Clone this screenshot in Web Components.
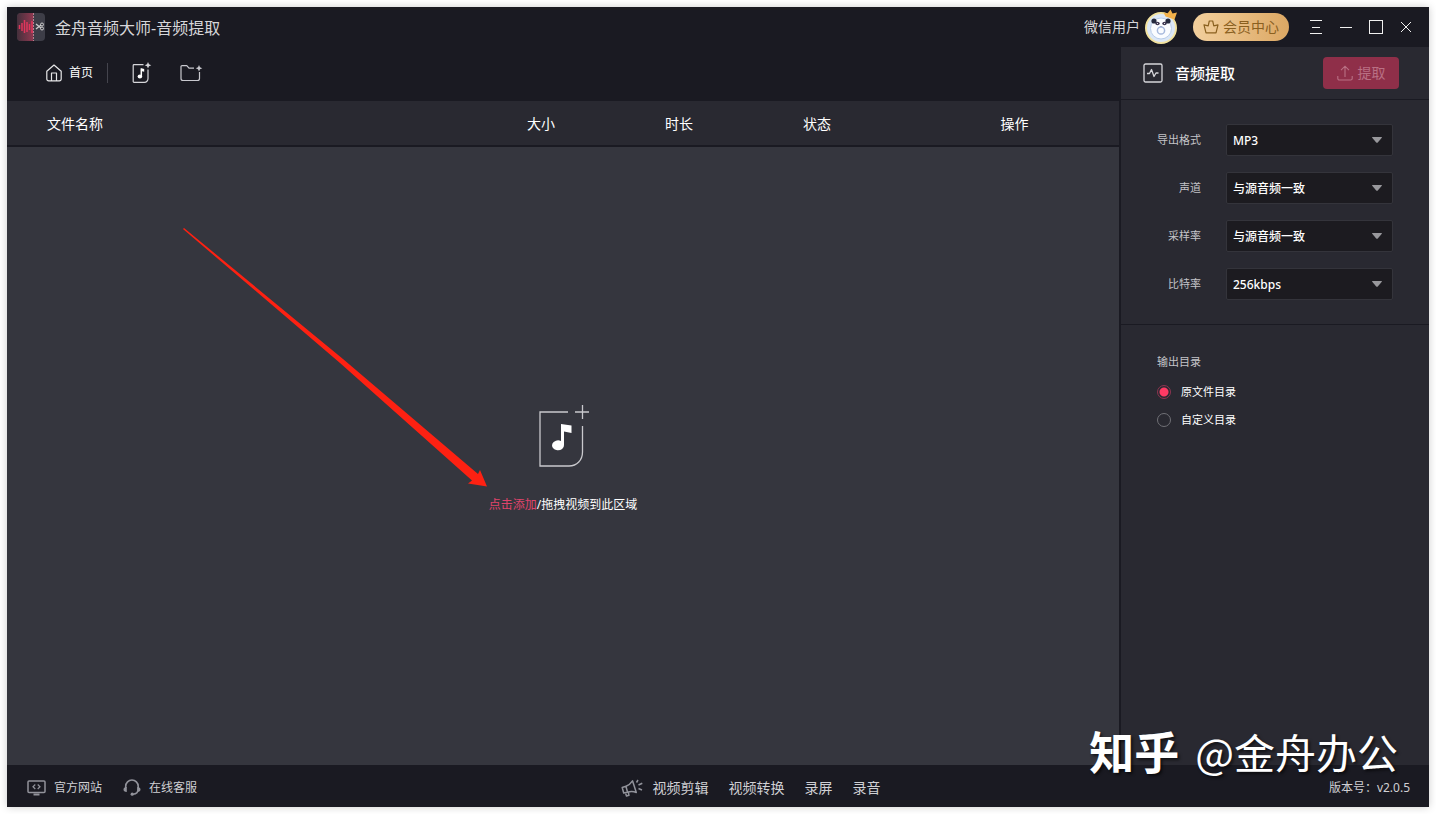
<!DOCTYPE html>
<html lang="zh-CN">
<head>
<meta charset="utf-8">
<meta name="viewport" content="width=device-width, initial-scale=1">
<title>金舟音频大师-音频提取</title>
<style>
  html, body { height: 100%; }
  body {
    --bar: #1a1a22;
    --panel: #292931;
    --stage: #35363e;
    --accent: #ff3a64;
    --muted: #c4c4c8;
    background: #fff;
    box-sizing: border-box;
    color: #fff;
    font-family: "Noto Sans", "Noto Sans CJK SC", sans-serif;
    font-size: 12px;
    line-height: 20px;
    margin: 0;
    padding: 7px;
  }
</style>
</head>
<body>
<audio-window></audio-window>

<script>
const ICONS = {
  app: `<svg width="28" height="28" viewBox="0 0 28 28">
    <defs><linearGradient id="g"><stop offset="0" stop-color="#44303c"/><stop offset="1" stop-color="#8f3850"/></linearGradient></defs>
    <rect width="28" height="28" rx="4" fill="#3d3d47"/>
    <path d="M4 0H16V28H4a4 4 0 0 1-4-4V4a4 4 0 0 1 4-4Z" fill="url(#g)"/>
    <path d="M2.500 12v4M5 10v8M7.500 7v13M10 9v10M12.500 11v6M15 8v12" stroke="#e0365c" stroke-width="1.500"/>
    <path d="M16.500 0V28" stroke="#b9808f" stroke-dasharray="2 1"/>
    <path d="M19 11l5 4M19 16l5-4" stroke="#ccc" stroke-width="1.300"/>
    <circle cx="25" cy="11.500" r="1.500" fill="none" stroke="#ccc"/><circle cx="25" cy="15.500" r="1.500" fill="none" stroke="#ccc"/></svg>`,
  home: `<svg width="16" height="18" viewBox="0 0 16 18" fill="none" stroke="#e6e6e8" stroke-width="1.200" stroke-linejoin="round">
    <path d="M.8 7.200 8 1l7.200 6.200V15a1.800 1.800 0 0 1-1.800 1.800H2.600A1.800 1.800 0 0 1 .8 15ZM5.500 16.500V9h5v7.500"/></svg>`,
  addMusic: `<svg width="20" height="22" viewBox="0 0 20 22" fill="none" stroke="#d6d6da" stroke-width="1.200">
    <path d="M11.500 2.600H2a.8.8 0 0 0-.8.8V19.500a.8.8 0 0 0 .8.8H12.500a3.500 3.500 0 0 0 3.500-3.500V7.500"/>
    <path d="M16 0 17 2.300 19.300 3.300 17 4.300 16 6.500 15 4.300 12.700 3.300 15 2.300Z" fill="#d6d6da" stroke="none"/>
    <path d="M9.300 7.300V14" stroke="#fff" stroke-width="1.500"/><path d="M8.600 6 12.200 7V9.800L9 9Z" fill="#fff" stroke="none"/><ellipse cx="7.900" cy="14.500" rx="2.300" ry="1.900" fill="#fff" stroke="none"/></svg>`,
  addFolder: `<svg width="23" height="18" viewBox="0 0 23 18" fill="none" stroke="#c8c8ce" stroke-width="1.200" stroke-linejoin="round">
    <path d="M14 4.200H9L6.800 1.600H2a1 1 0 0 0-1 1V14.500A2 2 0 0 0 3 16.500H17.500A2 2 0 0 0 19.500 14.500V8"/>
    <path d="M19 1 20 3.200 22.300 4.200 20 5.200 19 7.400 18 5.200 15.700 4.200 18 3.200Z" fill="#c8c8ce" stroke="none"/></svg>`,
  crown: `<svg width="16" height="14" viewBox="0 0 16 14" fill="none" stroke="#8a601f" stroke-width="1.200" stroke-linejoin="round">
    <path d="M1 4.800 5.200 5.800 6.300 1H9.700L10.800 5.800 15 4.800 13 12.800H3Z"/></svg>`,
  avatar: `<svg width="34" height="36" viewBox="0 0 34 36">
    <circle cx="16" cy="19" r="15" fill="#dbe7f6" stroke="#f3e3a0" stroke-width="2"/>
    <ellipse cx="16" cy="19.500" rx="10.500" ry="10.500" fill="#fafcff" stroke="#b9cdea"/>
    <circle cx="9" cy="12" r="2.600" fill="#252a3e"/><circle cx="23" cy="12" r="2.600" fill="#252a3e"/>
    <ellipse cx="12.500" cy="14.500" rx="2.200" ry="1.800" fill="#3c3650"/><ellipse cx="19.500" cy="14.500" rx="2.200" ry="1.800" fill="#3c3650"/>
    <circle cx="12.500" cy="14.500" r=".6" fill="#fff"/><circle cx="19.500" cy="14.500" r=".6" fill="#fff"/>
    <path d="M15 17H17L16 18Z" fill="#3c3650"/>
    <circle cx="16" cy="21.500" r="3.600" fill="none" stroke="#a6b8dc" stroke-width="1.500"/>
    <path d="M18.500 3.500 22.500 4.500 25.500 .5 27.500 4.500 32 3.500 29.500 10.500 20.500 7.500Z" fill="#f3b14a"/></svg>`,
  menu: `<svg width="14" height="14" viewBox="0 0 14 14" stroke="#f0f0f0"><path d="M1 .5H13M3 7.500H11M1 13.500H13"/></svg>`,
  minimize: `<svg width="14" height="14" viewBox="0 0 14 14" stroke="#f0f0f0"><path d="M1 7.500H13"/></svg>`,
  maximize: `<svg width="14" height="14" viewBox="0 0 14 14" fill="none" stroke="#f0f0f0"><rect x=".5" y=".5" width="13" height="13"/></svg>`,
  close: `<svg width="14" height="14" viewBox="0 0 14 14" stroke="#f0f0f0"><path d="M2 2 12 12M12 2 2 12"/></svg>`,
  wave: `<svg width="20" height="20" viewBox="0 0 20 20" fill="none" stroke="#d6d6da" stroke-width="1.300" stroke-linejoin="round">
    <rect x="1" y="1" width="18" height="18" rx="1.500"/><path d="M4 10.500H6.500L8.500 6.500 11 13.500 13 10H15.500"/></svg>`,
  upload: `<svg width="16" height="16" viewBox="0 0 16 16" fill="none" stroke="#b97084" stroke-width="1.100">
    <path d="M8 12V1.500M4 5.200 8 1.200 12 5.200M.8 11V13.500A1.500 1.500 0 0 0 2.300 15H13.700A1.500 1.500 0 0 0 15.200 13.500V11"/></svg>`,
  dropMusic: `<svg width="52" height="62" viewBox="0 0 52 62" fill="none" stroke="#c9c9cd" stroke-width="1.300">
    <path d="M31 7H3V61H32C40 61 45.500 55 45.500 47V21M45.500 0V14M38 7H52"/>
    <path d="M24 19 34.500 20.500V28L27 26.500V40A6 5 0 1 1 24 36Z" fill="#fff" stroke="none"/></svg>`,
  site: `<svg width="19" height="16" viewBox="0 0 19 16" fill="none" stroke="#92939b" stroke-width="1.500">
    <rect x="1" y="1" width="17" height="11.500" rx="1"/><path d="M8.300 4.500 6 6.700 8.300 9M10.700 4.500 13 6.700 10.700 9" stroke-width="1.200"/><path d="M6.500 14.500H12.500" stroke-width="2"/></svg>`,
  service: `<svg width="18" height="17" viewBox="0 0 18 17" fill="none" stroke="#92939b" stroke-width="1.600">
    <path d="M2.700 9V7.300A6.200 6.200 0 0 1 15.200 7.300V10C15.200 13.200 13 15 10 15.300"/>
    <path d="M3.800 8V13C1.500 13 .5 11.800 .5 10.500S1.500 8 3.800 8ZM14.200 8V13C16.500 13 17.500 11.800 17.500 10.500S16.500 8 14.200 8Z" fill="#92939b" stroke="none"/>
    <circle cx="9.200" cy="15.200" r="1.600" fill="#92939b" stroke="none"/></svg>`,
  horn: `<svg width="22" height="18" viewBox="0 0 22 18" fill="none" stroke="#92939b" stroke-width="1.500" stroke-linejoin="round">
    <path d="M1.200 8.500 5 7.300C8 6.300 10 4 11.500 1.800L15.300 13.500C12.500 12.300 9.500 12.200 6.500 13.200L2.700 14ZM5 7.500 6.500 13M4.500 14 5.500 17 8 16.300 7.300 13.200M15.500 3.500 17 1M17.500 6 21.300 4.300M17.500 9.500 21 11"/></svg>`,
  caret: `<svg width="12" height="8" viewBox="0 0 12 8"><path d="M1.500 1H10.500Q11.200 1 10.800 1.700L6.800 6.500Q6 7.200 5.200 6.500L1.200 1.700Q.8 1 1.500 1Z" fill="#98989c"/></svg>`
}

// rules every shadow root starts with
const BASE = `
  * { box-sizing: border-box; }
  button {
    background: none; border: 0; color: inherit; cursor: pointer;
    font: inherit; margin: 0; padding: 0;
  }
  a { color: inherit; text-decoration: none; }
`

function define(name, html) {
  const template = document.createElement('template')
  template.innerHTML = html.replace('<style>', `<style>${BASE}`)
  customElements.define(name, class extends HTMLElement {
    constructor () {
      super()
      this.attachShadow({mode: 'open'}).append(template.content.cloneNode(true))
    }
  })
}

customElements.define('au-icon', class extends HTMLElement {
  constructor () {
    super()
    this.attachShadow({mode: 'open'})
  }

  connectedCallback () {
    this.setAttribute('aria-hidden', 'true')
    this.shadowRoot.innerHTML = `
      <style>
        :host { display: inline-flex; flex: none; }
        svg { display: block; }
      </style>
      ${ICONS[this.getAttribute('name')] || ''}`
  }
})

customElements.define('option-select', class extends HTMLElement {
  constructor () {
    super()
    this.attachShadow({mode: 'open'})
  }

  connectedCallback () {
    const options = this.getAttribute('options').split(',')
    this.shadowRoot.innerHTML = `
      <style>
        ${BASE}
        :host { align-items: center; display: flex; gap: 25px; }
        label { color: var(--muted); flex: none; font-size: 11px; text-align: right; width: 44px; }
        .box { align-items: center; display: grid; flex: 1; }
        .box > * { grid-area: 1 / 1; }
        select {
          appearance: none;
          background: #1c1b20;
          border: 1px solid #34343b;
          border-radius: 2px;
          color: #fff;
          font: inherit;
          font-weight: 500;
          height: 32px;
          padding: 2px 28px 0 6px;
          width: 100%;
        }
        au-icon { justify-self: end; margin-right: 10px; pointer-events: none; }
      </style>
      <label for="field">${this.getAttribute('label')}</label>
      <div class="box">
        <select id="field">${options.map(o => `<option>${o}</option>`).join('')}</select>
        <au-icon name="caret"></au-icon>
      </div>`
  }
})

define('title-bar', `
  <style>
    :host {
      align-items: center; background: var(--bar); color: #d6d6d9; display: flex;
      font-size: 14px; height: 40px; padding: 0 8px 0 10px;
    }
    h1 { flex: 1; font-size: 16px; font-weight: 400; margin: 0 0 0 10px; padding-top: 2px; }
    .user { align-items: center; display: flex; gap: 5px; margin-right: 14px; }
    .vip {
      align-items: center; background: linear-gradient(90deg, #f2cf9d, #dca864);
      border-radius: 14px; color: #8a601f; display: flex; gap: 4px; height: 28px;
      justify-content: center; margin-right: 12px; width: 96px;
    }
    .win { align-items: center; display: flex; height: 30px; justify-content: center; width: 30px; }
  </style>
  <au-icon name="app"></au-icon>
  <h1>金舟音频大师-音频提取</h1>
  <button class="user">微信用户<au-icon name="avatar"></au-icon></button>
  <button class="vip"><au-icon name="crown"></au-icon>会员中心</button>
  <button class="win" aria-label="菜单"><au-icon name="menu"></au-icon></button>
  <button class="win" aria-label="最小化"><au-icon name="minimize"></au-icon></button>
  <button class="win" aria-label="最大化"><au-icon name="maximize"></au-icon></button>
  <button class="win" aria-label="关闭"><au-icon name="close"></au-icon></button>
`)

define('tool-bar', `
  <style>
    :host {
      align-items: center; background: var(--bar); display: flex;
      flex: none; height: 54px; padding: 0 0 2px 39px;
    }
    button { align-items: center; display: flex; }
    .home {
      border-right: 1px solid #44444d; gap: 7px; margin-right: 24px; padding-right: 14px;
    }
    .music { margin-right: 28px; }
  </style>
  <button class="home"><au-icon name="home"></au-icon>首页</button>
  <button class="music" aria-label="添加文件"><au-icon name="addMusic"></au-icon></button>
  <button aria-label="添加文件夹"><au-icon name="addFolder"></au-icon></button>
`)

define('file-table', `
  <style>
    :host { background: var(--panel); border-bottom: 2px solid var(--bar); display: block; flex: none; }
    table { border-collapse: collapse; font-size: 14px; table-layout: fixed; width: 100%; }
    th { font-weight: 400; height: 44px; padding: 2px 0 0; }
    .name { padding-left: 40px; text-align: left; }
    .num { width: 138px; }
    .act { padding-left: 24px; width: 233px; }
  </style>
  <table>
    <thead>
      <tr>
        <th class="name" scope="col">文件名称</th>
        <th class="num" scope="col">大小</th>
        <th class="num" scope="col">时长</th>
        <th class="num" scope="col">状态</th>
        <th class="act" scope="col">操作</th>
      </tr>
    </thead>
  </table>
`)

define('drop-zone', `
  <style>
    :host {
      align-items: center; background: var(--stage); display: flex; flex: 1;
      flex-direction: column; gap: 28px; justify-content: center; padding-top: 8px;
    }
    p { margin: 0; }
    button { color: #e0446c; }
  </style>
  <au-icon name="dropMusic"></au-icon>
  <p><button>点击添加</button>/拖拽视频到此区域</p>
`)

define('side-panel', `
  <style>
    :host { background: var(--panel); border-left: 2px solid var(--bar); display: block; }
    header {
      align-items: center; border-bottom: 1px solid var(--bar); display: flex;
      gap: 12px; height: 53px; padding: 0 30px 0 22px;
    }
    h2 { flex: 1; font-size: 15px; font-weight: 500; margin: 0; }
    .go {
      align-items: center; background: #8f2f49; border-radius: 4px; color: #b97084; display: flex;
      font-size: 14px; gap: 5px; height: 32px; justify-content: center; width: 76px;
    }
    .options {
      border-bottom: 1px solid var(--bar); display: flex; flex-direction: column;
      gap: 16px; padding: 24px 36px;
    }
    fieldset { border: 0; font-size: 11px; margin: 0; padding: 27px 36px; }
    legend { color: var(--muted); float: left; margin-bottom: 10px; padding: 0; width: 100%; }
    .radio { align-items: center; clear: both; display: flex; gap: 10px; height: 20px; margin-bottom: 8px; }
    input {
      appearance: none; border: 1px solid #707076; border-radius: 50%;
      height: 14px; margin: 0; width: 14px;
    }
    input:checked {
      background: radial-gradient(circle, var(--accent) 4px, transparent 5px);
      border-color: #8d3450;
    }
  </style>
  <header>
    <au-icon name="wave"></au-icon>
    <h2>音频提取</h2>
    <button class="go"><au-icon name="upload"></au-icon>提取</button>
  </header>
  <div class="options">
    <option-select label="导出格式" options="MP3,WAV,FLAC"></option-select>
    <option-select label="声道" options="与源音频一致"></option-select>
    <option-select label="采样率" options="与源音频一致"></option-select>
    <option-select label="比特率" options="256kbps,128kbps"></option-select>
  </div>
  <fieldset>
    <legend>输出目录</legend>
    <label class="radio"><input type="radio" name="dir" checked>原文件目录</label>
    <label class="radio"><input type="radio" name="dir">自定义目录</label>
  </fieldset>
`)

define('status-bar', `
  <style>
    :host {
      align-items: center; background: var(--bar); color: #d0d0d4; display: flex;
      height: 42px; justify-content: space-between; padding: 3px 19px 0 20px;
    }
    nav { align-items: center; display: flex; gap: 21px; }
    a { align-items: center; display: flex; gap: 8px; }
    .more { font-size: 14px; gap: 20px; }
    .more au-icon { margin-right: 2px; }
    .version { min-width: 106px; text-align: right; }
  </style>
  <nav>
    <a href="#site"><au-icon name="site"></au-icon>官方网站</a>
    <a href="#service"><au-icon name="service"></au-icon>在线客服</a>
  </nav>
  <nav class="more">
    <a href="#edit"><au-icon name="horn"></au-icon>视频剪辑</a>
    <a href="#convert">视频转换</a>
    <a href="#screen">录屏</a>
    <a href="#record">录音</a>
  </nav>
  <span class="version">版本号：v2.0.5</span>
`)

define('audio-window', `
  <style>
    :host {
      box-shadow: 0 0 8px rgb(0 0 0 / 20%); display: flex; flex-direction: column;
      min-height: 100%; position: relative;
    }
    main { display: flex; flex: 1; }
    .files { display: flex; flex: 1; flex-direction: column; }
    side-panel { flex: none; width: 310px; }
    .arrow { left: 176px; pointer-events: none; position: absolute; top: 221px; }
    .mark {
      align-items: center; bottom: 32px; display: flex; font-family: "Noto Sans CJK SC", sans-serif;
      font-size: 41px; gap: 16px; line-height: 48px; pointer-events: none; position: absolute;
      right: 31px; text-shadow: 2px 2px 3px rgb(0 0 0 / 60%);
    }
    .mark b { font-size: 45px; }
  </style>
  <title-bar></title-bar>
  <main>
    <div class="files">
      <tool-bar></tool-bar>
      <file-table></file-table>
      <drop-zone></drop-zone>
    </div>
    <side-panel></side-panel>
  </main>
  <status-bar></status-bar>
  <svg class="arrow" width="304" height="260" viewBox="0 0 304 260" aria-hidden="true">
    <path d="M0 1 1 0 160 131 295 246 297 242 304 258.500 285 255.500 289 252.500 157 135Z" fill="#fd2112"/>
  </svg>
  <div class="mark"><b>知乎</b><span>@金舟办公</span></div>
`)
</script>
</body>
</html>
